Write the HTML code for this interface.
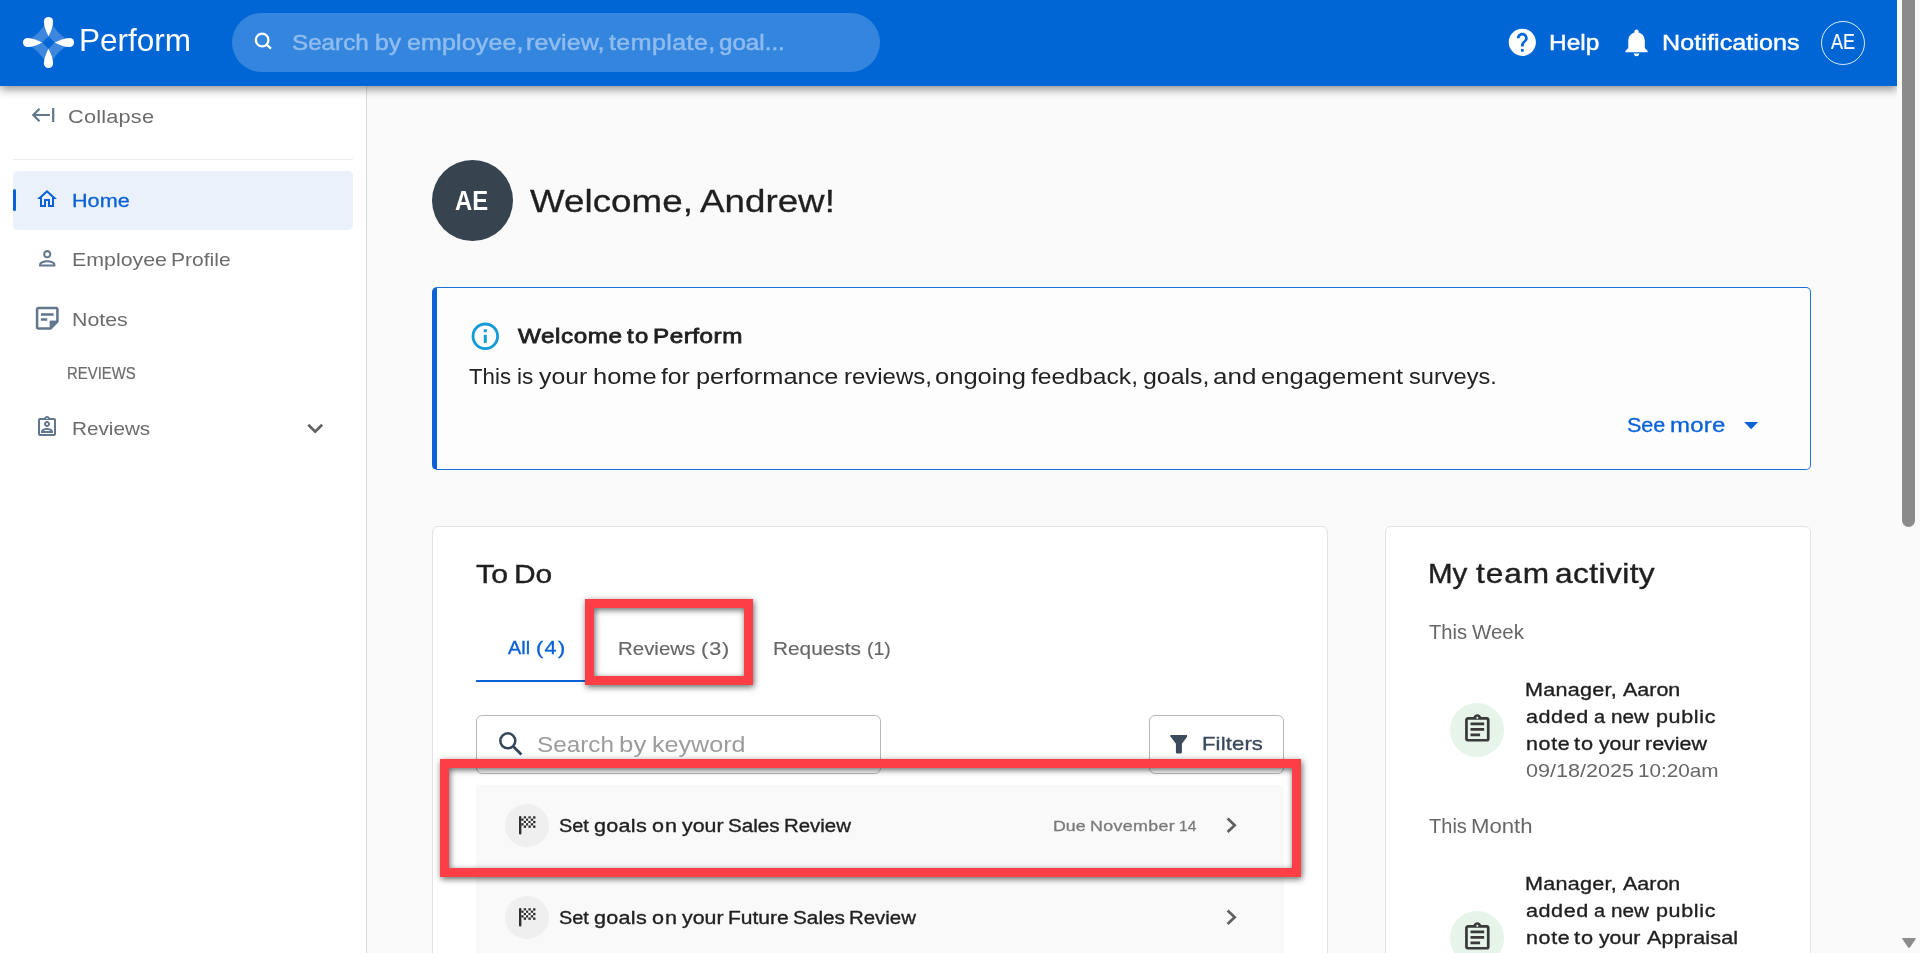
<!DOCTYPE html>
<html><head><meta charset="utf-8"><title>Perform</title>
<style>
*{box-sizing:border-box;margin:0;padding:0}
html,body{width:1920px;height:953px;overflow:hidden;background:#fafafa;font-family:"Liberation Sans",sans-serif}
.a{position:absolute}
.t{position:absolute;white-space:nowrap;line-height:1;transform-origin:0 0}
#hdr{left:0;top:0;width:1897px;height:86px;background:#0066d6;box-shadow:0 3px 9px rgba(0,0,0,.45);clip-path:inset(0 0 -24px 0)}
#side{left:0;top:86px;width:367px;height:867px;background:#fff;border-right:1px solid #dcdcdc}
#pill{left:232px;top:13px;width:648px;height:59px;border-radius:30px;background:#3385de}
#hav{left:1821px;top:21px;width:44px;height:44px;border-radius:50%;border:1.3px solid rgba(255,255,255,.85)}
#sdiv{left:13px;top:159px;width:340px;height:1px;background:#ededed}
#homebg{left:13px;top:171px;width:340px;height:59px;border-radius:5px;background:#eaf1fb}
#homebar{left:13px;top:189px;width:3px;height:22px;border-radius:2px;background:#0b62d6}
#av{left:432px;top:160px;width:81px;height:81px;border-radius:50%;background:#37434f}
#banner{left:432px;top:287px;width:1379px;height:183px;border:1px solid #1a73d9;border-left:5px solid #0b62d6;border-radius:5px;background:#fdfdfd}
.card{background:#fff;border:1px solid #e3e3e3;border-radius:6px}
#todo{left:432px;top:526px;width:896px;height:480px}
#team{left:1385px;top:526px;width:426px;height:480px}
#tabline{left:476px;top:679.5px;width:112px;height:2.5px;background:#0b62d6}
#kwbox{left:476px;top:715px;width:405px;height:59px;border:1px solid #b8b8b8;border-radius:6px;background:#fff}
#fbtn{left:1149px;top:715px;width:135px;height:59px;border:1px solid #b8b8b8;border-radius:6px;background:#fff}
.row{left:476px;width:808px;height:92px;background:#f9f9f9}
.ic{width:44px;height:43px;border-radius:50%;background:#efefef}
.tic{width:54px;height:54px;border-radius:50%;background:#e6f4ea}
.red{border:9px solid #fc3f46;filter:drop-shadow(1px 2.5px 3px rgba(0,0,0,.6))}
#sbthumb{left:1902px;top:0;width:13px;height:527px;border-radius:0 0 6.5px 6.5px;background:#8b8b8b}
</style></head><body>
<div id="side" class="a"></div>
<div id="sdiv" class="a"></div>
<div id="homebg" class="a"></div>
<div id="homebar" class="a"></div>
<div id="av" class="a"></div>
<div id="banner" class="a"></div>
<div id="todo" class="a card"></div>
<div id="team" class="a card"></div>
<div id="tabline" class="a"></div>
<div id="kwbox" class="a"></div>
<div id="fbtn" class="a"></div>
<div class="a row" style="top:785px"></div>
<div class="a row" style="top:877px"></div>
<div class="a ic" style="left:505px;top:803.8px"></div>
<div class="a ic" style="left:505px;top:895.8px"></div>
<div class="a tic" style="left:1450px;top:703px"></div>
<div class="a tic" style="left:1450px;top:910.8px"></div>
<svg class="a" style="left:30px;top:104px" width="28" height="22" viewBox="30 104 28 22" fill="none" stroke="#62778d" stroke-width="2.2"><path d="M33.4 115H49.9M39.5 108.8L33.3 115L39.5 121.2M53.2 108.1V121.9"/></svg>
<svg class="a" style="left:35.2px;top:186.9px" width="24" height="24" viewBox="0 0 24 24" fill="#0b62d6"><path d="M12 5.69l5 4.5V18h-2v-6H9v6H7v-7.81l5-4.5M12 3L2 12h3v8h6v-6h2v6h6v-8h3L12 3z"/></svg>
<svg class="a" style="left:34.8px;top:245.9px" width="24.5" height="24.5" viewBox="0 0 24 24" fill="#62778d"><path d="M12 6c1.1 0 2 .9 2 2s-.9 2-2 2-2-.9-2-2 .9-2 2-2m0 10c2.7 0 5.8 1.29 6 2H6c.23-.72 3.31-2 6-2m0-12C9.79 4 8 5.79 8 8s1.79 4 4 4 4-1.79 4-4-1.79-4-4-4zm0 10c-2.67 0-8 1.34-8 4v2h16v-2c0-2.66-5.33-4-8-4z"/></svg>
<svg class="a" style="left:31.9px;top:302.8px" width="30.5" height="30.5" viewBox="0 0 24 24" fill="#62778d"><path d="M19,5v9l-5,0l0,5H5V5H19 M19,3H5C3.9,3,3,3.9,3,5v14c0,1.1,0.9,2,2,2h10l6-6V5C21,3.9,20.1,3,19,3z M12,14H7v-2h5V14z M17,10H7V8h10V10z"/><path d="M14 14H19.6L14 19.6Z"/></svg>
<svg class="a" style="left:35.1px;top:415.2px" width="24" height="24" viewBox="0 0 24 24" fill="#62778d"><path d="M19 3h-4.18C14.4 1.84 13.3 1 12 1s-2.4.84-2.82 2H5c-1.1 0-2 .9-2 2v14c0 1.1.9 2 2 2h14c1.1 0 2-.9 2-2V5c0-1.1-.9-2-2-2zm-7-.25c.41 0 .75.34.75.75s-.34.75-.75.75-.75-.34-.75-.75.34-.75.75-.75zM19 19H5V5h14v14zM12 6c-1.65 0-3 1.35-3 3s1.35 3 3 3 3-1.35 3-3-1.35-3-3-3zm0 4c-.55 0-1-.45-1-1s.45-1 1-1 1 .45 1 1-.45 1-1 1zm-6 6.47V18h12v-1.53c0-2.5-3.97-3.58-6-3.58s-6 1.07-6 3.58zM8.31 16c.69-.56 2.38-1.12 3.69-1.12s3.01.56 3.69 1.12H8.31z"/></svg>
<svg class="a" style="left:304px;top:420px" width="24" height="18" viewBox="304 420 24 18" fill="none" stroke="#606060" stroke-width="2.6"><path d="M308.3 424.8L315.2 431.6L322.1 424.8"/></svg>
<svg class="a" style="left:470px;top:321px" width="32" height="32" viewBox="470 321 32 32" fill="none"><circle cx="485.3" cy="336.3" r="12.3" stroke="#129bd6" stroke-width="2.8"/><rect x="483.8" y="334.9" width="3" height="8" fill="#129bd6"/><rect x="483.8" y="329.3" width="3" height="2.9" fill="#129bd6"/></svg>
<svg class="a" style="left:1742px;top:420px" width="20" height="12" viewBox="1742 420 20 12"><path d="M1744.2 422.1H1758.1L1751.15 429.2Z" fill="#0b62d6"/></svg>
<svg class="a" style="left:496px;top:729px" width="30" height="30" viewBox="496 729 30 30" fill="none" stroke="#34475a"><circle cx="507.8" cy="740.85" r="7.5" stroke-width="2.5"/><path d="M513.3 746.5L521.4 754.5" stroke-width="2.8"/></svg>
<svg class="a" style="left:1169.7px;top:735.3px" width="17.8" height="18.4" viewBox="0 0 17.8 18.4"><path d="M1.2 0H16.6Q18.4 0 17.3 1.5L11.9 8.8V17.2Q11.9 18.4 10.7 18.4H7.1Q5.9 18.4 5.9 17.2V8.8L0.5 1.5Q-0.6 0 1.2 0Z" fill="#3c4b5b"/></svg>
<svg class="a" style="left:519px;top:816.0px" width="18" height="19" viewBox="0 0 18 19"><rect x="0" y="0" width="2.4" height="18.6" rx="1" fill="#303030"/><rect x="4.74" y="0.30" width="2.34" height="2.3" fill="#2b2b2b"/><rect x="9.42" y="0.30" width="2.34" height="2.3" fill="#2b2b2b"/><rect x="14.10" y="0.30" width="2.34" height="2.3" fill="#2b2b2b"/><rect x="2.40" y="2.60" width="2.34" height="2.3" fill="#2b2b2b"/><rect x="4.74" y="2.60" width="2.34" height="2.3" fill="#fff"/><rect x="7.08" y="2.60" width="2.34" height="2.3" fill="#2b2b2b"/><rect x="9.42" y="2.60" width="2.34" height="2.3" fill="#fff"/><rect x="11.76" y="2.60" width="2.34" height="2.3" fill="#2b2b2b"/><rect x="2.40" y="4.90" width="2.34" height="2.3" fill="#fff"/><rect x="4.74" y="4.90" width="2.34" height="2.3" fill="#2b2b2b"/><rect x="7.08" y="4.90" width="2.34" height="2.3" fill="#fff"/><rect x="9.42" y="4.90" width="2.34" height="2.3" fill="#2b2b2b"/><rect x="11.76" y="4.90" width="2.34" height="2.3" fill="#fff"/><rect x="14.10" y="4.90" width="2.34" height="2.3" fill="#2b2b2b"/><rect x="2.40" y="7.20" width="2.34" height="2.3" fill="#2b2b2b"/><rect x="4.74" y="7.20" width="2.34" height="2.3" fill="#fff"/><rect x="7.08" y="7.20" width="2.34" height="2.3" fill="#2b2b2b"/><rect x="9.42" y="7.20" width="2.34" height="2.3" fill="#fff"/><rect x="11.76" y="7.20" width="2.34" height="2.3" fill="#2b2b2b"/><rect x="4.74" y="9.50" width="2.34" height="2.3" fill="#2b2b2b"/><rect x="9.42" y="9.50" width="2.34" height="2.3" fill="#2b2b2b"/><rect x="14.10" y="9.50" width="2.34" height="2.3" fill="#2b2b2b"/></svg>
<svg class="a" style="left:519px;top:908.0px" width="18" height="19" viewBox="0 0 18 19"><rect x="0" y="0" width="2.4" height="18.6" rx="1" fill="#303030"/><rect x="4.74" y="0.30" width="2.34" height="2.3" fill="#2b2b2b"/><rect x="9.42" y="0.30" width="2.34" height="2.3" fill="#2b2b2b"/><rect x="14.10" y="0.30" width="2.34" height="2.3" fill="#2b2b2b"/><rect x="2.40" y="2.60" width="2.34" height="2.3" fill="#2b2b2b"/><rect x="4.74" y="2.60" width="2.34" height="2.3" fill="#fff"/><rect x="7.08" y="2.60" width="2.34" height="2.3" fill="#2b2b2b"/><rect x="9.42" y="2.60" width="2.34" height="2.3" fill="#fff"/><rect x="11.76" y="2.60" width="2.34" height="2.3" fill="#2b2b2b"/><rect x="2.40" y="4.90" width="2.34" height="2.3" fill="#fff"/><rect x="4.74" y="4.90" width="2.34" height="2.3" fill="#2b2b2b"/><rect x="7.08" y="4.90" width="2.34" height="2.3" fill="#fff"/><rect x="9.42" y="4.90" width="2.34" height="2.3" fill="#2b2b2b"/><rect x="11.76" y="4.90" width="2.34" height="2.3" fill="#fff"/><rect x="14.10" y="4.90" width="2.34" height="2.3" fill="#2b2b2b"/><rect x="2.40" y="7.20" width="2.34" height="2.3" fill="#2b2b2b"/><rect x="4.74" y="7.20" width="2.34" height="2.3" fill="#fff"/><rect x="7.08" y="7.20" width="2.34" height="2.3" fill="#2b2b2b"/><rect x="9.42" y="7.20" width="2.34" height="2.3" fill="#fff"/><rect x="11.76" y="7.20" width="2.34" height="2.3" fill="#2b2b2b"/><rect x="4.74" y="9.50" width="2.34" height="2.3" fill="#2b2b2b"/><rect x="9.42" y="9.50" width="2.34" height="2.3" fill="#2b2b2b"/><rect x="14.10" y="9.50" width="2.34" height="2.3" fill="#2b2b2b"/></svg>
<svg class="a" style="left:1222px;top:814px" width="20" height="24" viewBox="1222 814 20 24" fill="none" stroke="#606060" stroke-width="2.7"><path d="M1227.6 818.6L1234.7 825.3L1227.6 832"/></svg>
<svg class="a" style="left:1222px;top:906px" width="20" height="24" viewBox="1222 814 20 24" fill="none" stroke="#606060" stroke-width="2.7"><path d="M1227.6 818.6L1234.7 825.3L1227.6 832"/></svg>
<svg class="a" style="left:1460.9px;top:713.2px" width="32.7" height="32.7" viewBox="0 0 24 24" fill="#3a3a3a"><path d="M7 15h7v2H7zm0-4h10v2H7zm0-4h10v2H7zm12-4h-4.18C14.4 1.84 13.3 1 12 1c-1.3 0-2.4.84-2.82 2H5c-.14 0-.27.01-.4.04-.39.08-.74.28-1.01.55-.18.18-.33.4-.43.64-.1.23-.16.49-.16.77v14c0 .27.06.54.16.78s.25.45.43.64c.27.27.62.47 1.01.55.13.02.26.03.4.03h14c1.1 0 2-.9 2-2V5c0-1.1-.9-2-2-2zm-7-.25c.41 0 .75.34.75.75s-.34.75-.75.75-.75-.34-.75-.75.34-.75.75-.75zM19 19H5V5h14v14z"/></svg>
<svg class="a" style="left:1460.9px;top:921px" width="32.7" height="32.7" viewBox="0 0 24 24" fill="#3a3a3a"><path d="M7 15h7v2H7zm0-4h10v2H7zm0-4h10v2H7zm12-4h-4.18C14.4 1.84 13.3 1 12 1c-1.3 0-2.4.84-2.82 2H5c-.14 0-.27.01-.4.04-.39.08-.74.28-1.01.55-.18.18-.33.4-.43.64-.1.23-.16.49-.16.77v14c0 .27.06.54.16.78s.25.45.43.64c.27.27.62.47 1.01.55.13.02.26.03.4.03h14c1.1 0 2-.9 2-2V5c0-1.1-.9-2-2-2zm-7-.25c.41 0 .75.34.75.75s-.34.75-.75.75-.75-.34-.75-.75.34-.75.75-.75zM19 19H5V5h14v14z"/></svg>

<div class="t" style="left:455.47px;top:187px;font-size:27.10px;font-weight:700;color:#fff;transform:scaleX(0.8789);">AE</div>
<div class="t" style="left:67.88px;top:108px;font-size:18.89px;color:#6b6b6b;letter-spacing:0.172px;transform:scaleX(1.1517);">Collapse</div>
<div class="t" style="left:72.31px;top:191px;font-size:18.99px;color:#0b62d6;-webkit-text-stroke:0.3px #0b62d6;transform:scaleX(1.1392);">Home</div>
<div class="t" style="left:72.15px;top:250px;font-size:19.22px;color:#6b6b6b;transform:scaleX(1.1118);">Employee</div>
<div class="t" style="left:171.07px;top:250px;font-size:19.22px;color:#6b6b6b;transform:scaleX(1.0961);">Profile</div>
<div class="t" style="left:72.15px;top:310px;font-size:19.22px;color:#6b6b6b;transform:scaleX(1.1099);">Notes</div>
<div class="t" style="left:66.96px;top:365px;font-size:16.43px;color:#6b6b6b;-webkit-text-stroke:0.2px #6b6b6b;transform:scaleX(0.9071);">REVIEWS</div>
<div class="t" style="left:71.79px;top:419px;font-size:19.22px;color:#6b6b6b;transform:scaleX(1.0771);">Reviews</div>
<div class="t" style="left:530.17px;top:185px;font-size:32.03px;color:#1f1f1f;-webkit-text-stroke:0.3px #1f1f1f;letter-spacing:0.023px;transform:scaleX(1.1479);">Welcome,</div>
<div class="t" style="left:700.27px;top:185px;font-size:32.03px;color:#1f1f1f;-webkit-text-stroke:0.3px #1f1f1f;letter-spacing:0.009px;transform:scaleX(1.1478);">Andrew!</div>
<div class="t" style="left:518.33px;top:325px;font-size:21.05px;color:#1f1f1f;-webkit-text-stroke:0.8px #1f1f1f;letter-spacing:0.509px;transform:scaleX(1.1500);">Welcome</div>
<div class="t" style="left:627.32px;top:325px;font-size:21.05px;color:#1f1f1f;-webkit-text-stroke:0.8px #1f1f1f;letter-spacing:1.220px;transform:scaleX(1.1340);">to</div>
<div class="t" style="left:653.37px;top:325px;font-size:21.05px;color:#1f1f1f;-webkit-text-stroke:0.8px #1f1f1f;letter-spacing:0.464px;transform:scaleX(1.1517);">Perform</div>
<div class="t" style="left:469.17px;top:365px;font-size:22.73px;color:#222;transform:scaleX(0.9786);">This</div>
<div class="t" style="left:516.57px;top:365px;font-size:22.73px;color:#222;transform:scaleX(0.9958);">is</div>
<div class="t" style="left:539.05px;top:365px;font-size:22.73px;color:#222;transform:scaleX(1.0906);">your</div>
<div class="t" style="left:592.64px;top:365px;font-size:22.73px;color:#222;transform:scaleX(1.1208);">home</div>
<div class="t" style="left:661.49px;top:365px;font-size:22.73px;color:#222;transform:scaleX(1.0882);">for</div>
<div class="t" style="left:696.42px;top:365px;font-size:22.73px;color:#222;transform:scaleX(1.1171);">performance</div>
<div class="t" style="left:843.97px;top:365px;font-size:22.73px;color:#222;transform:scaleX(1.0546);">reviews,</div>
<div class="t" style="left:935.29px;top:365px;font-size:22.73px;color:#222;transform:scaleX(1.1240);">ongoing</div>
<div class="t" style="left:1031.19px;top:365px;font-size:22.73px;color:#222;transform:scaleX(1.0862);">feedback,</div>
<div class="t" style="left:1142.82px;top:365px;font-size:22.73px;color:#222;transform:scaleX(1.0971);">goals,</div>
<div class="t" style="left:1212.53px;top:365px;font-size:22.73px;color:#222;letter-spacing:0.082px;transform:scaleX(1.1445);">and</div>
<div class="t" style="left:1260.88px;top:365px;font-size:22.73px;color:#222;transform:scaleX(1.1251);">engagement</div>
<div class="t" style="left:1408.91px;top:365px;font-size:22.73px;color:#222;transform:scaleX(1.0381);">surveys.</div>
<div class="t" style="left:1627.35px;top:415px;font-size:20.91px;color:#0b62d6;-webkit-text-stroke:0.35px #0b62d6;transform:scaleX(1.0308);">See</div>
<div class="t" style="left:1670.06px;top:415px;font-size:20.91px;color:#0b62d6;-webkit-text-stroke:0.35px #0b62d6;letter-spacing:0.192px;transform:scaleX(1.1456);">more</div>
<div class="t" style="left:476.35px;top:561px;font-size:26.62px;color:#1f1f1f;-webkit-text-stroke:0.4px #1f1f1f;transform:scaleX(1.1382);">To</div>
<div class="t" style="left:513.93px;top:561px;font-size:26.62px;color:#1f1f1f;-webkit-text-stroke:0.4px #1f1f1f;transform:scaleX(1.1245);">Do</div>
<div class="t" style="left:508.02px;top:639px;font-size:18.84px;color:#0b62d6;-webkit-text-stroke:0.35px #0b62d6;transform:scaleX(1.0555);">All</div>
<div class="t" style="left:536.23px;top:639px;font-size:18.84px;color:#0b62d6;-webkit-text-stroke:0.35px #0b62d6;letter-spacing:1.188px;transform:scaleX(1.1470);">(4)</div>
<div class="t" style="left:617.99px;top:640px;font-size:18.89px;color:#666;-webkit-text-stroke:0.15px #666;transform:scaleX(1.0830);">Reviews</div>
<div class="t" style="left:701.35px;top:640px;font-size:18.89px;color:#666;-webkit-text-stroke:0.15px #666;letter-spacing:0.821px;transform:scaleX(1.1446);">(3)</div>
<div class="t" style="left:772.66px;top:640px;font-size:18.89px;color:#666;-webkit-text-stroke:0.15px #666;transform:scaleX(1.1033);">Requests</div>
<div class="t" style="left:866.84px;top:640px;font-size:18.89px;color:#666;-webkit-text-stroke:0.15px #666;transform:scaleX(1.0301);">(1)</div>
<div class="t" style="left:537.37px;top:734px;font-size:22.58px;color:#9c9c9c;transform:scaleX(1.0747);">Search</div>
<div class="t" style="left:619.31px;top:734px;font-size:22.58px;color:#9c9c9c;transform:scaleX(1.1449);">by</div>
<div class="t" style="left:652.06px;top:734px;font-size:22.58px;color:#9c9c9c;transform:scaleX(1.1117);">keyword</div>
<div class="t" style="left:1201.83px;top:734px;font-size:19.25px;color:#3a4a5c;-webkit-text-stroke:0.35px #3a4a5c;letter-spacing:0.126px;transform:scaleX(1.1456);">Filters</div>
<div class="t" style="left:559.20px;top:817px;font-size:18.79px;color:#1f1f1f;-webkit-text-stroke:0.35px #1f1f1f;transform:scaleX(1.0597);">Set</div>
<div class="t" style="left:594.10px;top:817px;font-size:18.79px;color:#1f1f1f;-webkit-text-stroke:0.35px #1f1f1f;letter-spacing:0.248px;transform:scaleX(1.1490);">goals</div>
<div class="t" style="left:651.90px;top:817px;font-size:18.79px;color:#1f1f1f;-webkit-text-stroke:0.35px #1f1f1f;letter-spacing:0.844px;transform:scaleX(1.1486);">on</div>
<div class="t" style="left:681.60px;top:817px;font-size:18.79px;color:#1f1f1f;-webkit-text-stroke:0.35px #1f1f1f;transform:scaleX(1.1360);">your</div>
<div class="t" style="left:727.98px;top:817px;font-size:18.79px;color:#1f1f1f;-webkit-text-stroke:0.35px #1f1f1f;transform:scaleX(1.0992);">Sales</div>
<div class="t" style="left:784.01px;top:817px;font-size:18.79px;color:#1f1f1f;-webkit-text-stroke:0.35px #1f1f1f;transform:scaleX(1.0862);">Review</div>
<div class="t" style="left:1053.38px;top:818px;font-size:15.49px;color:#7a7a7a;-webkit-text-stroke:0.3px #7a7a7a;letter-spacing:0.044px;transform:scaleX(1.1464);">Due</div>
<div class="t" style="left:1089.98px;top:818px;font-size:15.49px;color:#7a7a7a;-webkit-text-stroke:0.3px #7a7a7a;letter-spacing:0.325px;transform:scaleX(1.1500);">November</div>
<div class="t" style="left:1178.75px;top:818px;font-size:15.49px;color:#7a7a7a;-webkit-text-stroke:0.3px #7a7a7a;transform:scaleX(1.0084);">14</div>
<div class="t" style="left:559.20px;top:909px;font-size:18.79px;color:#1f1f1f;-webkit-text-stroke:0.35px #1f1f1f;transform:scaleX(1.0597);">Set</div>
<div class="t" style="left:594.10px;top:909px;font-size:18.79px;color:#1f1f1f;-webkit-text-stroke:0.35px #1f1f1f;letter-spacing:0.248px;transform:scaleX(1.1490);">goals</div>
<div class="t" style="left:651.90px;top:909px;font-size:18.79px;color:#1f1f1f;-webkit-text-stroke:0.35px #1f1f1f;letter-spacing:0.844px;transform:scaleX(1.1486);">on</div>
<div class="t" style="left:681.60px;top:909px;font-size:18.79px;color:#1f1f1f;-webkit-text-stroke:0.35px #1f1f1f;transform:scaleX(1.1360);">your</div>
<div class="t" style="left:727.87px;top:909px;font-size:18.79px;color:#1f1f1f;-webkit-text-stroke:0.35px #1f1f1f;transform:scaleX(1.1188);">Future</div>
<div class="t" style="left:792.98px;top:909px;font-size:18.79px;color:#1f1f1f;-webkit-text-stroke:0.35px #1f1f1f;transform:scaleX(1.1070);">Sales</div>
<div class="t" style="left:849.02px;top:909px;font-size:18.79px;color:#1f1f1f;-webkit-text-stroke:0.35px #1f1f1f;transform:scaleX(1.0874);">Review</div>
<div class="t" style="left:1428.33px;top:560px;font-size:27.54px;color:#1f1f1f;-webkit-text-stroke:0.4px #1f1f1f;transform:scaleX(1.0722);">My</div>
<div class="t" style="left:1475.92px;top:560px;font-size:27.54px;color:#1f1f1f;-webkit-text-stroke:0.4px #1f1f1f;letter-spacing:0.815px;transform:scaleX(1.1474);">team</div>
<div class="t" style="left:1555.24px;top:560px;font-size:27.54px;color:#1f1f1f;-webkit-text-stroke:0.4px #1f1f1f;letter-spacing:0.365px;transform:scaleX(1.1496);">activity</div>
<div class="t" style="left:1429.00px;top:623px;font-size:19.86px;color:#666;transform:scaleX(1.0172);">This</div>
<div class="t" style="left:1472.48px;top:623px;font-size:19.86px;color:#666;transform:scaleX(1.0304);">Week</div>
<div class="t" style="left:1525.26px;top:681px;font-size:18.75px;color:#1f1f1f;-webkit-text-stroke:0.35px #1f1f1f;letter-spacing:0.212px;transform:scaleX(1.1502);">Manager,</div>
<div class="t" style="left:1622.62px;top:681px;font-size:18.75px;color:#1f1f1f;-webkit-text-stroke:0.35px #1f1f1f;transform:scaleX(1.1442);">Aaron</div>
<div class="t" style="left:1526.09px;top:708px;font-size:18.75px;color:#1f1f1f;-webkit-text-stroke:0.35px #1f1f1f;letter-spacing:0.488px;transform:scaleX(1.1493);">added</div>
<div class="t" style="left:1593.81px;top:708px;font-size:18.75px;color:#1f1f1f;-webkit-text-stroke:0.35px #1f1f1f;transform:scaleX(1.0640);">a</div>
<div class="t" style="left:1611.23px;top:708px;font-size:18.75px;color:#1f1f1f;-webkit-text-stroke:0.35px #1f1f1f;transform:scaleX(1.1028);">new</div>
<div class="t" style="left:1655.54px;top:708px;font-size:18.75px;color:#1f1f1f;-webkit-text-stroke:0.35px #1f1f1f;letter-spacing:0.564px;transform:scaleX(1.1477);">public</div>
<div class="t" style="left:1525.50px;top:735px;font-size:18.75px;color:#1f1f1f;-webkit-text-stroke:0.35px #1f1f1f;letter-spacing:0.601px;transform:scaleX(1.1430);">note</div>
<div class="t" style="left:1574.08px;top:735px;font-size:18.75px;color:#1f1f1f;-webkit-text-stroke:0.35px #1f1f1f;letter-spacing:0.901px;transform:scaleX(1.1610);">to</div>
<div class="t" style="left:1598.70px;top:735px;font-size:18.75px;color:#1f1f1f;-webkit-text-stroke:0.35px #1f1f1f;transform:scaleX(1.1332);">your</div>
<div class="t" style="left:1644.81px;top:735px;font-size:18.75px;color:#1f1f1f;-webkit-text-stroke:0.35px #1f1f1f;transform:scaleX(1.1455);">review</div>
<div class="t" style="left:1525.75px;top:761px;font-size:19.22px;color:#666;transform:scaleX(1.1242);">09/18/2025</div>
<div class="t" style="left:1638.19px;top:761px;font-size:19.22px;color:#666;transform:scaleX(1.0787);">10:20am</div>
<div class="t" style="left:1429.30px;top:817px;font-size:19.86px;color:#666;transform:scaleX(1.0093);">This</div>
<div class="t" style="left:1471.33px;top:817px;font-size:19.86px;color:#666;transform:scaleX(1.1156);">Month</div>
<div class="t" style="left:1525.26px;top:875px;font-size:18.75px;color:#1f1f1f;-webkit-text-stroke:0.35px #1f1f1f;letter-spacing:0.212px;transform:scaleX(1.1502);">Manager,</div>
<div class="t" style="left:1622.62px;top:875px;font-size:18.75px;color:#1f1f1f;-webkit-text-stroke:0.35px #1f1f1f;transform:scaleX(1.1442);">Aaron</div>
<div class="t" style="left:1526.09px;top:902px;font-size:18.75px;color:#1f1f1f;-webkit-text-stroke:0.35px #1f1f1f;letter-spacing:0.488px;transform:scaleX(1.1493);">added</div>
<div class="t" style="left:1593.81px;top:902px;font-size:18.75px;color:#1f1f1f;-webkit-text-stroke:0.35px #1f1f1f;transform:scaleX(1.0640);">a</div>
<div class="t" style="left:1611.23px;top:902px;font-size:18.75px;color:#1f1f1f;-webkit-text-stroke:0.35px #1f1f1f;transform:scaleX(1.1028);">new</div>
<div class="t" style="left:1655.54px;top:902px;font-size:18.75px;color:#1f1f1f;-webkit-text-stroke:0.35px #1f1f1f;letter-spacing:0.564px;transform:scaleX(1.1477);">public</div>
<div class="t" style="left:1525.50px;top:929px;font-size:18.75px;color:#1f1f1f;-webkit-text-stroke:0.35px #1f1f1f;letter-spacing:0.601px;transform:scaleX(1.1430);">note</div>
<div class="t" style="left:1574.08px;top:929px;font-size:18.75px;color:#1f1f1f;-webkit-text-stroke:0.35px #1f1f1f;letter-spacing:0.901px;transform:scaleX(1.1610);">to</div>
<div class="t" style="left:1598.70px;top:929px;font-size:18.75px;color:#1f1f1f;-webkit-text-stroke:0.35px #1f1f1f;transform:scaleX(1.1332);">your</div>
<div class="t" style="left:1646.52px;top:929px;font-size:18.75px;color:#1f1f1f;-webkit-text-stroke:0.35px #1f1f1f;letter-spacing:0.147px;transform:scaleX(1.1488);">Appraisal</div>

<div class="a red" style="left:585px;top:599px;width:168px;height:86px"></div>
<div class="a red" style="left:440px;top:759px;width:861px;height:118px"></div>
<div id="hdr" class="a"></div>
<div id="pill" class="a"></div>
<div id="hav" class="a"></div>
<svg class="a" style="left:22px;top:16px" width="53" height="53" viewBox="-26.5 -26.5 53 53"><path d="M0 -25Q7.4 -7.4 25 0Q7.4 7.4 0 25Q-7.4 7.4 -25 0Q-7.4 -7.4 0 -25Z" fill="#3d87de"/><path d="M0 -6.2L6.2 0L0 6.2L-6.2 0Z" fill="#0066d6"/><g fill="#fff"><path d="M0 -6.2C-2.3 -10.6 -4.6 -16.2 -4.6 -21A4.6 4.6 0 0 1 4.6 -21C4.6 -16.2 2.3 -10.6 0 -6.2Z"/><path d="M0 -6.2C-2.3 -10.6 -4.6 -16.2 -4.6 -21A4.6 4.6 0 0 1 4.6 -21C4.6 -16.2 2.3 -10.6 0 -6.2Z" transform="rotate(90)"/><path d="M0 -6.2C-2.3 -10.6 -4.6 -16.2 -4.6 -21A4.6 4.6 0 0 1 4.6 -21C4.6 -16.2 2.3 -10.6 0 -6.2Z" transform="rotate(180)"/><path d="M0 -6.2C-2.3 -10.6 -4.6 -16.2 -4.6 -21A4.6 4.6 0 0 1 4.6 -21C4.6 -16.2 2.3 -10.6 0 -6.2Z" transform="rotate(270)"/></g></svg>
<svg class="a" style="left:250px;top:28px" width="28" height="28" viewBox="250 28 28 28" fill="none" stroke="#fff" stroke-width="2.3"><circle cx="262.15" cy="40" r="6.3"/><path d="M266.7 44.6L271 48.6"/></svg>
<svg class="a" style="left:1506px;top:25.8px" width="32.64" height="32.64" viewBox="0 0 24 24" fill="#fff"><path d="M12 2C6.48 2 2 6.48 2 12s4.48 10 10 10 10-4.48 10-10S17.52 2 12 2zm1 17h-2v-2h2v2zm2.07-7.75l-.9.92C13.45 12.9 13 13.5 13 15h-2v-.5c0-1.1.45-2.1 1.17-2.83l1.24-1.26c.37-.36.59-.86.59-1.41 0-1.1-.9-2-2-2s-2 .9-2 2H8c0-2.21 1.79-4 4-4s4 1.79 4 4c0 .88-.36 1.68-.93 2.25z"/></svg>
<svg class="a" style="left:1619.5px;top:25.55px" width="33.1" height="33.1" viewBox="0 0 24 24" fill="#fff"><path d="M12 22c1.1 0 2-.9 2-2h-4c0 1.1.89 2 2 2zm6-6v-5c0-3.07-1.64-5.64-4.5-6.32V4c0-.83-.67-1.5-1.5-1.5s-1.5.67-1.5 1.5v.68C7.63 5.36 6 7.92 6 11v5l-2 2v1h16v-1l-2-2z"/></svg>

<div class="t" style="left:79.27px;top:25px;font-size:30.58px;color:#fff;transform:scaleX(1.0301);">Perform</div>
<div class="t" style="left:292.26px;top:32px;font-size:21.76px;color:#8fbcee;-webkit-text-stroke:0.5px #8fbcee;transform:scaleX(1.1135);">Search</div>
<div class="t" style="left:374.66px;top:32px;font-size:21.76px;color:#8fbcee;-webkit-text-stroke:0.5px #8fbcee;letter-spacing:0.120px;transform:scaleX(1.1340);">by</div>
<div class="t" style="left:406.76px;top:32px;font-size:21.76px;color:#8fbcee;-webkit-text-stroke:0.5px #8fbcee;letter-spacing:0.122px;transform:scaleX(1.1492);">employee,</div>
<div class="t" style="left:526.41px;top:32px;font-size:21.76px;color:#8fbcee;-webkit-text-stroke:0.5px #8fbcee;letter-spacing:0.048px;transform:scaleX(1.1530);">review,</div>
<div class="t" style="left:608.81px;top:32px;font-size:21.76px;color:#8fbcee;-webkit-text-stroke:0.5px #8fbcee;letter-spacing:0.375px;transform:scaleX(1.1478);">template,</div>
<div class="t" style="left:718.58px;top:32px;font-size:21.76px;color:#8fbcee;-webkit-text-stroke:0.5px #8fbcee;transform:scaleX(1.1105);">goal...</div>
<div class="t" style="left:1548.53px;top:32px;font-size:21.83px;color:#fff;-webkit-text-stroke:0.45px #fff;transform:scaleX(1.1190);">Help</div>
<div class="t" style="left:1662.26px;top:32px;font-size:21.83px;color:#fff;-webkit-text-stroke:0.45px #fff;letter-spacing:0.071px;transform:scaleX(1.1492);">Notifications</div>
<div class="t" style="left:1831.00px;top:31px;font-size:21.95px;color:#fff;-webkit-text-stroke:0.2px #fff;transform:scaleX(0.8180);">AE</div>

<div id="sbthumb" class="a"></div>
<svg class="a" style="left:1900.5px;top:937px" width="16" height="12" viewBox="0 0 16 12"><path d="M1.8 1 H14.2 Q15.2 1 14.7 1.9 L9 10.3 Q8 11.6 7 10.3 L1.3 1.9 Q0.8 1 1.8 1Z" fill="#8b8b8b"/></svg>
</body></html>
